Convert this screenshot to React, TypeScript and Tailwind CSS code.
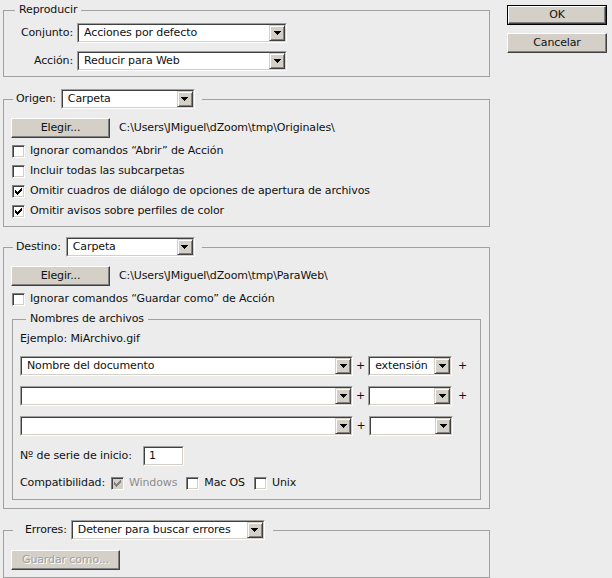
import React from "react";

const fs = "border border-[#a0a0a0] px-[7px] min-w-0 m-0";

function Arrow() {
  return (
    <div className="w-[16px] h-full shrink-0 bg-[#d4d0c8] border border-t-[#d4d0c8] border-l-[#d4d0c8] border-b-[#404040] border-r-[#404040] shadow-[inset_1px_1px_0_#fff,inset_-1px_-1px_0_#808080] flex items-center justify-center">
      <svg width="7" height="4" viewBox="0 0 7 4" shapeRendering="crispEdges">
        <path d="M0 0h7v1h-7zM1 1h5v1h-5zM2 2h3v1h-3zM3 3h1v1h-1z" fill="#000" />
      </svg>
    </div>
  );
}

function Select({ className, text }: { className: string; text?: string }) {
  return (
    <div className={`h-[20px] flex shrink-0 border border-t-[#a0a0a0] border-l-[#a0a0a0] border-b-white border-r-white ${className}`}>
      <div className="flex-1 flex min-w-0 bg-white border border-t-[#404040] border-l-[#404040] border-b-[#d4d0c8] border-r-[#d4d0c8]">
        <span className="flex-1 pl-[5px] leading-[16px] whitespace-nowrap overflow-hidden">{text}</span>
        <Arrow />
      </div>
    </div>
  );
}

function Btn({
  className,
  children,
  disabled,
}: {
  className: string;
  children: React.ReactNode;
  disabled?: boolean;
}) {
  return (
    <div
      className={`h-[20px] shrink-0 bg-[#d4d0c8] border border-t-white border-l-white border-b-[#404040] border-r-[#404040] shadow-[inset_-1px_-1px_0_#808080] flex items-center justify-center ${
        disabled ? "text-[#a0a0a0] [text-shadow:1px_1px_0_#fff]" : ""
      } ${className}`}
    >
      {children}
    </div>
  );
}

function Check({ checked, disabled, className }: { checked?: boolean; disabled?: boolean; className?: string }) {
  return (
    <div
      className={`w-[13px] h-[13px] shrink-0 border border-t-[#808080] border-l-[#808080] border-b-white border-r-white shadow-[inset_1px_1px_0_#404040,inset_-1px_-1px_0_#d4d0c8] flex items-center justify-center ${
        disabled ? "bg-[#d4d0c8]" : "bg-white"
      } ${className ?? ""}`}
    >
      {checked && (
        <svg width="7" height="7" viewBox="0 0 7 7" shapeRendering="crispEdges">
          <path
            d="M6 0h1v1h-1zM5 1h2v1h-2zM0 2h1v1h-1zM4 2h3v1h-3zM0 3h2v1h-2zM3 3h3v1h-3zM0 4h5v1h-5zM1 5h3v1h-3zM2 6h1v1h-1z"
            fill={disabled ? "#808080" : "#000"}
          />
        </svg>
      )}
    </div>
  );
}

function CheckRow({ checked, children }: { checked?: boolean; children: React.ReactNode }) {
  return (
    <div className="h-[20px] flex items-center">
      <Check checked={checked} className="ml-[1px]" />
      <span className="ml-[5px] whitespace-nowrap">{children}</span>
    </div>
  );
}

export default function App() {
  return (
    <div className="w-[612px] h-[578px] bg-[#ececec] flex font-['DejaVu_Sans',sans-serif] text-[11px] tracking-[-0.12px] leading-[14px] text-[#111] overflow-hidden">
      <div className="ml-[3px] w-[487px] pt-[3px] flex flex-col shrink-0">
        {/* Reproducir */}
        <fieldset className={`${fs} pb-[5px]`}>
          <legend className="ml-[4px] px-[4px] leading-[14px]">Reproducir</legend>
          <div className="pt-[6px] flex flex-col gap-[8px]">
            <div className="flex items-center">
              <span className="w-[62px] mr-[4px] text-right">Conjunto:</span>
              <Select className="w-[210px]" text="Acciones por defecto" />
            </div>
            <div className="flex items-center">
              <span className="w-[62px] mr-[4px] text-right">Acción:</span>
              <Select className="w-[210px]" text="Reducir para Web" />
            </div>
          </div>
        </fieldset>

        {/* Origen */}
        <fieldset className={`${fs} mt-[12px] pb-[5px]`}>
          <legend className="ml-[2px] pl-[3px] pr-[7px] flex items-center gap-[5px]">
            <span>Origen:</span>
            <Select className="w-[134px]" text="Carpeta" />
          </legend>
          <div className="pt-[9px] flex flex-col">
            <div className="flex items-center">
              <Btn className="w-[99px]">Elegir...</Btn>
              <span className="ml-[9px] whitespace-nowrap">{"C:\\Users\\JMiguel\\dZoom\\tmp\\Originales\\"}</span>
            </div>
            <div className="mt-[3px] flex flex-col">
              <CheckRow>{"Ignorar comandos \u201CAbrir\u201D de Acción"}</CheckRow>
              <CheckRow>Incluir todas las subcarpetas</CheckRow>
              <CheckRow checked>Omitir cuadros de diálogo de opciones de apertura de archivos</CheckRow>
              <CheckRow checked>Omitir avisos sobre perfiles de color</CheckRow>
            </div>
          </div>
        </fieldset>

        {/* Destino */}
        <fieldset className={`${fs} mt-[10px] pb-[8px]`}>
          <legend className="ml-[2px] pl-[3px] pr-[7px] flex items-center gap-[5px]">
            <span>Destino:</span>
            <Select className="w-[129px]" text="Carpeta" />
          </legend>
          <div className="pt-[9px] flex flex-col">
            <div className="flex items-center">
              <Btn className="w-[99px]">Elegir...</Btn>
              <span className="ml-[9px] whitespace-nowrap">{"C:\\Users\\JMiguel\\dZoom\\tmp\\ParaWeb\\"}</span>
            </div>
            <div className="mt-[3px]">
              <CheckRow>{"Ignorar comandos \u201CGuardar como\u201D de Acción"}</CheckRow>
            </div>
            <fieldset className={`${fs} mt-[3px] mx-[1px] pb-[6px]`}>
              <legend className="ml-[6px] px-[4px] leading-[14px]">Nombres de archivos</legend>
              <div className="pt-[5px] flex flex-col">
                <div className="h-[16px] flex items-center">Ejemplo: MiArchivo.gif</div>
                <div className="mt-[9px] flex items-center">
                  <Select className="w-[333px]" text="Nombre del documento" />
                  <span className="w-[16px] text-center">+</span>
                  <Select className="w-[84px]" text="extensión" />
                  <span className="w-[22px] text-center">+</span>
                </div>
                <div className="mt-[10px] flex items-center">
                  <Select className="w-[333px]" />
                  <span className="w-[16px] text-center">+</span>
                  <Select className="w-[84px]" />
                  <span className="w-[22px] text-center">+</span>
                </div>
                <div className="mt-[10px] flex items-center">
                  <Select className="w-[333px]" />
                  <span className="w-[16px] text-center">+</span>
                  <Select className="w-[84px]" />
                </div>
                <div className="mt-[10px] flex items-center">
                  <span className="w-[123px] whitespace-nowrap">Nº de serie de inicio:</span>
                  <div className="w-[41px] h-[20px] border border-t-[#a0a0a0] border-l-[#a0a0a0] border-b-white border-r-white">
                    <div className="h-full bg-white border border-t-[#404040] border-l-[#404040] border-b-[#d4d0c8] border-r-[#d4d0c8] pl-[4px] leading-[16px]">
                      1
                    </div>
                  </div>
                </div>
                <div className="mt-[7px] h-[20px] flex items-center">
                  <span className="w-[91px] whitespace-nowrap">Compatibilidad:</span>
                  <Check checked disabled />
                  <span className="ml-[5px] text-[#8d8d8d]">Windows</span>
                  <Check className="ml-[9px]" />
                  <span className="ml-[5px]">Mac OS</span>
                  <Check className="ml-[9px]" />
                  <span className="ml-[5px]">Unix</span>
                </div>
              </div>
            </fieldset>
          </div>
        </fieldset>

        {/* Errores */}
        <fieldset className={`${fs} mt-[11px] pb-[7px]`}>
          <legend className="ml-[2px] pl-[12px] pr-[8px] flex items-center gap-[4px]">
            <span>Errores:</span>
            <Select className="w-[194px]" text="Detener para buscar errores" />
          </legend>
          <div className="pt-[10px] flex">
            <Btn className="w-[109px]" disabled>
              Guardar como...
            </Btn>
          </div>
        </fieldset>
      </div>

      <div className="ml-[17px] w-[100px] pt-[5px] flex flex-col gap-[8px] shrink-0">
        <div className="h-[20px] border border-black flex">
          <div className="flex-1 bg-[#d4d0c8] border border-t-white border-l-white border-b-[#404040] border-r-[#404040] shadow-[inset_-1px_-1px_0_#808080] flex items-center justify-center">
            OK
          </div>
        </div>
        <Btn className="w-[100px]">Cancelar</Btn>
      </div>
    </div>
  );
}
